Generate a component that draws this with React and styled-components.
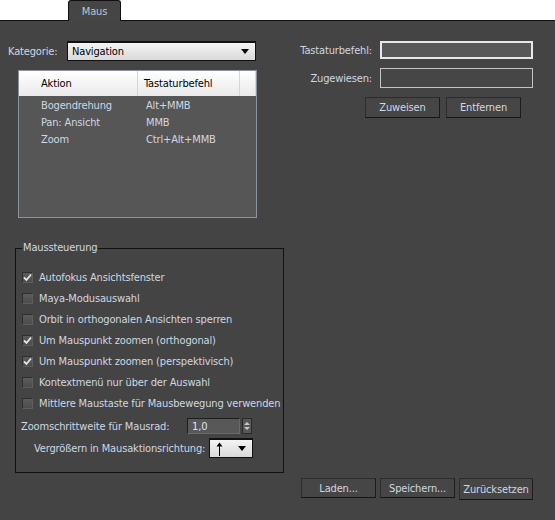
import React from 'react';
import styled, { createGlobalStyle } from 'styled-components';

const GlobalStyle = createGlobalStyle`
  html, body {
    margin: 0;
    padding: 0;
    background: #444444;
  }
  body {
    font-family: "DejaVu Sans Condensed", "Liberation Sans", Arial, sans-serif;
    font-size: 11px;
    letter-spacing: -0.15px;
    color: #cfd7e2;
  }
`;

const Page = styled.div`
  width: 555px;
  height: 520px;
  background: #444444;
  overflow: hidden;
`;

const TabStrip = styled.div`
  height: 20px;
  background: #ffffff;
  border-bottom: 1px solid #111;
  padding-left: 68px;
  display: flex;
  align-items: flex-end;
`;

const Tab = styled.div`
  width: 51px;
  height: 20px;
  margin-bottom: -1px;
  background: #454545;
  border: 1px solid #111;
  border-bottom: none;
  border-radius: 3px 3px 0 0;
  color: #b9c5d4;
  display: flex;
  align-items: center;
  justify-content: center;
`;

const TopSection = styled.div`
  display: flex;
  padding-top: 20px;
`;

const LeftCol = styled.div`
  width: 249px;
  padding-left: 8px;
`;

const FieldRow = styled.div`
  display: flex;
  align-items: center;
`;

const Label = styled.span`
  width: ${p => p.$width || 'auto'};
  padding-left: ${p => p.$indent || 0}px;
  white-space: nowrap;
`;

const Select = styled.div`
  width: ${p => p.$width}px;
  height: ${p => p.$height}px;
  box-sizing: border-box;
  border: 1px solid #111;
  border-top-width: 2px;
  background: linear-gradient(#f4f4f4, #d9d9d9);
  color: #000;
  display: flex;
  align-items: center;
  justify-content: space-between;
  padding: 0 6px 0 ${p => p.$padLeft || 4}px;
`;

const Caret = styled.span`
  width: 0;
  height: 0;
  border-left: 4px solid transparent;
  border-right: 4px solid transparent;
  border-top: 5px solid #000;
`;

const ListBox = styled.div`
  margin: 9px 0 0 10px;
  width: 239px;
  height: 148px;
  box-sizing: border-box;
  border: 1px solid #8d939d;
  background: #565656;
`;

const ListHeader = styled.div`
  display: grid;
  grid-template-columns: 119px 102px 1fr;
  height: 25px;
  background: linear-gradient(#ffffff, #eaeaea);
  color: #000;
`;

const HeaderCell = styled.div`
  display: flex;
  align-items: center;
  padding-left: ${p => p.$pad}px;
  border-right: 1px solid #d6d6d6;
`;

const ListRows = styled.div`
  padding-top: 1px;
`;

const ListRow = styled.div`
  display: grid;
  grid-template-columns: 105px 1fr;
  height: 17px;
  align-items: center;
  padding-left: 22px;
  color: #cfd7e2;
`;

const RightCol = styled.div`
  flex: 1;
  padding-right: 22px;
`;

const FormGrid = styled.div`
  display: grid;
  grid-template-columns: 1fr 153px;
  column-gap: 8px;
  row-gap: 9px;
  align-items: center;
`;

const RightLabel = styled.span`
  text-align: right;
  white-space: nowrap;
`;

const TextInput = styled.div`
  height: ${p => p.$height}px;
  box-sizing: border-box;
  border: ${p => p.$focus ? '2px solid #e8e8e8' : '1px solid #c4c4c4'};
  background: ${p => p.$focus ? '#585858' : '#464646'};
`;

const ButtonRow = styled.div`
  display: flex;
  justify-content: flex-end;
  gap: ${p => p.$gap}px;
  padding-right: ${p => p.$right}px;
  margin-top: ${p => p.$top}px;
`;

const Button = styled.button`
  width: ${p => p.$width}px;
  height: ${p => p.$height || 21}px;
  box-sizing: border-box;
  background: #464646;
  border: 1px solid #2c2c2c;
  border-bottom-color: #151515;
  border-right-color: #1c1c1c;
  color: #cfd7e2;
  font-family: inherit;
  font-size: 11px;
  letter-spacing: inherit;
  padding: 0;
  cursor: default;
`;

const GroupBox = styled.fieldset`
  margin: 23px 0 0 15px;
  width: 269px;
  box-sizing: border-box;
  border: 1px solid #111;
  padding: 0 0 14px 6px;
`;

const Legend = styled.legend`
  padding: 0 1px;
  line-height: 14px;
`;

const Options = styled.div`
  margin-top: 12px;
  display: flex;
  flex-direction: column;
`;

const CheckRow = styled.label`
  display: flex;
  align-items: center;
  gap: 6px;
  height: 21px;
  white-space: nowrap;
`;

const Box = styled.span`
  width: 11px;
  height: 11px;
  box-sizing: border-box;
  border: 1px solid #2e2e2e;
  border-right-color: #5e5e5e;
  border-bottom-color: #5e5e5e;
  background: linear-gradient(#5c5c5c, #4c4c4c);
  display: flex;
  align-items: center;
  justify-content: center;
`;

const ControlRow = styled.div`
  display: flex;
  align-items: center;
  justify-content: space-between;
  width: 231px;
  height: ${p => p.$height}px;
  margin-left: ${p => p.$shift || 0}px;
`;

const Spinner = styled.div`
  display: flex;
  gap: 2px;
  height: 16px;
`;

const SpinInput = styled.div`
  width: 53px;
  box-sizing: border-box;
  border: 1px solid #1c1c1c;
  border-right-color: #6a6a6a;
  border-bottom-color: #6a6a6a;
  background: #585858;
  padding-left: 4px;
  display: flex;
  align-items: center;
  color: #dfe5ec;
`;

const SpinButtons = styled.div`
  width: 10px;
  box-sizing: border-box;
  border: 1px solid #2a2a2a;
  background: #575757;
  display: flex;
  flex-direction: column;
  align-items: center;
  justify-content: center;
  gap: 2px;
`;

const SpinArrow = styled.span`
  width: 0;
  height: 0;
  border-left: 3px solid transparent;
  border-right: 3px solid transparent;
  ${p => p.$up ? 'border-bottom: 3px solid #c8c8c8;' : 'border-top: 3px solid #c8c8c8;'}
`;

const Check = () => (
  <svg width="9" height="9" viewBox="0 0 9 9">
    <path d="M1 4.5 L3.5 7 L8 1.5" fill="none" stroke="#e6e6e6" strokeWidth="1.8" />
  </svg>
);

const UpArrow = () => (
  <svg width="7" height="14" viewBox="0 0 7 14">
    <path d="M3.5 1 V14" fill="none" stroke="#000" strokeWidth="1" />
    <path d="M0.5 4.5 L3.5 0.5 L6.5 4.5 Z" fill="#000" />
  </svg>
);

const actions = [
  ['Bogendrehung', 'Alt+MMB'],
  ['Pan: Ansicht', 'MMB'],
  ['Zoom', 'Ctrl+Alt+MMB'],
];

const options = [
  ['Autofokus Ansichtsfenster', true],
  ['Maya-Modusauswahl', false],
  ['Orbit in orthogonalen Ansichten sperren', false],
  ['Um Mauspunkt zoomen (orthogonal)', true],
  ['Um Mauspunkt zoomen (perspektivisch)', true],
  ['Kontextmenü nur über der Auswahl', false],
  ['Mittlere Maustaste für Mausbewegung verwenden', false],
];

export default function App() {
  return (
    <Page>
      <GlobalStyle />
      <TabStrip>
        <Tab>Maus</Tab>
      </TabStrip>

      <TopSection>
        <LeftCol>
          <FieldRow>
            <Label $width="59px">Kategorie:</Label>
            <Select $width={189} $height={20}>
              Navigation
              <Caret />
            </Select>
          </FieldRow>
          <ListBox>
            <ListHeader>
              <HeaderCell $pad={22}>Aktion</HeaderCell>
              <HeaderCell $pad={6}>Tastaturbefehl</HeaderCell>
              <HeaderCell $pad={0} />
            </ListHeader>
            <ListRows>
              {actions.map(([name, key]) => (
                <ListRow key={name}>
                  <span>{name}</span>
                  <span>{key}</span>
                </ListRow>
              ))}
            </ListRows>
          </ListBox>
        </LeftCol>

        <RightCol>
          <FormGrid>
            <RightLabel>Tastaturbefehl:</RightLabel>
            <TextInput $focus $height={18} />
            <RightLabel>Zugewiesen:</RightLabel>
            <TextInput $height={20} />
          </FormGrid>
          <ButtonRow $gap={6} $right={12} $top={9}>
            <Button $width={75} $height={21}>Zuweisen</Button>
            <Button $width={75} $height={21}>Entfernen</Button>
          </ButtonRow>
        </RightCol>
      </TopSection>

      <GroupBox>
        <Legend>Maussteuerung</Legend>
        <Options>
          {options.map(([text, checked]) => (
            <CheckRow key={text}>
              <Box>{checked && <Check />}</Box>
              {text}
            </CheckRow>
          ))}
          <ControlRow $height={24} $shift={-1}>
            <Label>Zoomschrittweite für Mausrad:</Label>
            <Spinner>
              <SpinInput>1,0</SpinInput>
              <SpinButtons>
                <SpinArrow $up />
                <SpinArrow />
              </SpinButtons>
            </Spinner>
          </ControlRow>
          <ControlRow $height={20}>
            <Label $indent={12}>Vergrößern in Mausaktionsrichtung:</Label>
            <Select $width={44} $height={20} $padLeft={6}>
              <UpArrow />
              <Caret />
            </Select>
          </ControlRow>
        </Options>
      </GroupBox>

      <ButtonRow $gap={4} $right={22} $top={5}>
        <Button $width={75} $height={20}>Laden...</Button>
        <Button $width={75} $height={20}>Speichern...</Button>
        <Button $width={74} $height={22}>Zurücksetzen</Button>
      </ButtonRow>
    </Page>
  );
}
